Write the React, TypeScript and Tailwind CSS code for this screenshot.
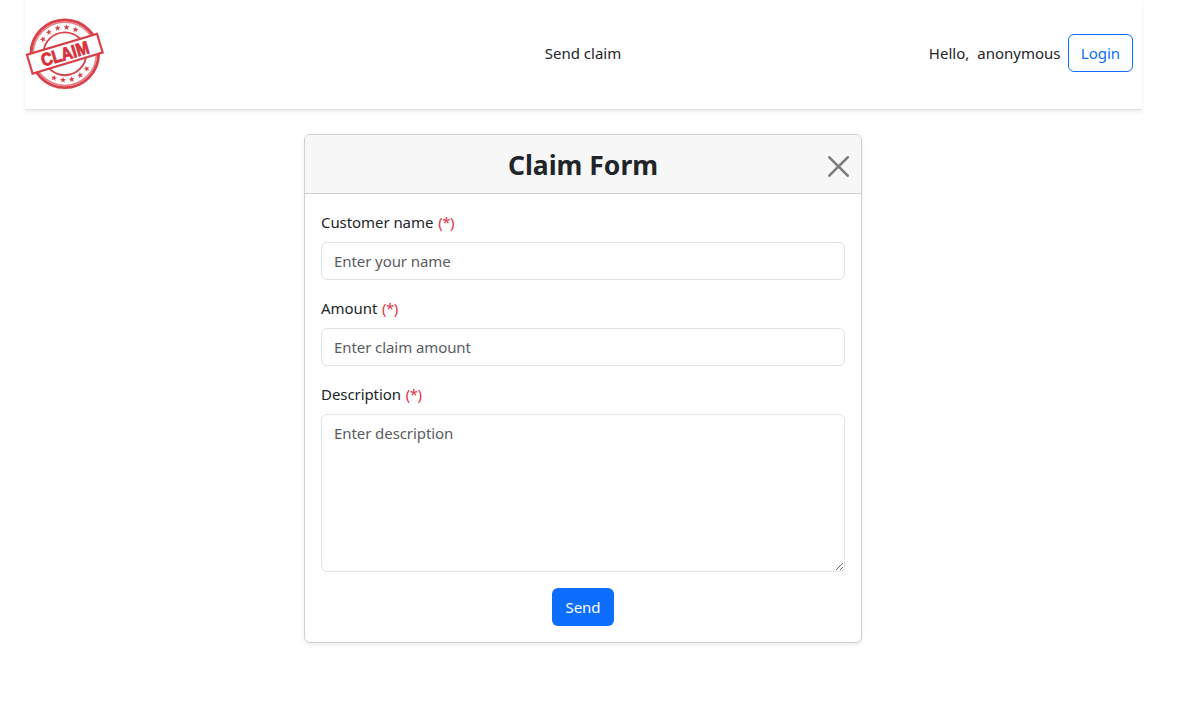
import React from "react";

const STARS: [number, number][] = [
  [43, 39.3], [48.8, 32.3], [57.6, 28.1], [66.6, 27.3], [75.5, 29.7],
  [54, 78], [63, 80], [71.7, 79.3], [80.3, 75.3], [86.7, 68.7],
];
const STAR = "M0 -3.1L.85 -1L3 -.95L1.25 .45L1.9 2.6L0 1.35L-1.9 2.6L-1.25 .45L-3 -.95L-.85 -1Z";

function Logo() {
  return (
    <svg viewBox="24 14 82 80" width="82" height="80" className="-ml-px block shrink-0">
      <g fill="none" stroke="#d8404a">
        <circle cx="64.8" cy="53.8" r="33.8" strokeWidth="2.9" />
        <circle cx="64.8" cy="53.8" r="31.6" strokeWidth="1.5" stroke="#e37f86" />
        <circle cx="64.8" cy="53.8" r="21.4" strokeWidth="1.9" />
      </g>
      {STARS.map(([x, y]) => (
        <path key={x} d={STAR} fill="#d8404a" transform={`translate(${x} ${y}) rotate(${(x - 65) * (y < 54 ? 1 : -1)})`} />
      ))}
      <g transform="translate(64.8 53.7) rotate(-16.7)">
        <rect x="-36.6" y="-9.8" width="73.2" height="19.6" fill="#fff" stroke="#d8404a" strokeWidth="2.2" />
        <text x="-24.3" y="6.4" textLength="49" lengthAdjust="spacingAndGlyphs" fill="#d5333c" stroke="#d5333c" strokeWidth=".9" fontSize="18" fontWeight="700" fontFamily="'Liberation Sans Narrow','Liberation Sans',sans-serif">CLAIM</text>
      </g>
    </svg>
  );
}

function Label({ text }: { text: string }) {
  return (
    <label className="mb-2 block h-6 whitespace-nowrap leading-6 tracking-[-0.07px]">
      {text} <span className="pl-px tracking-[-0.5px] text-[#dc3545]">(*)</span>
    </label>
  );
}

const FIELD = "block w-full rounded-md border border-[#dee2e6] bg-white px-3 py-[6px] leading-6 tracking-[-0.08px] outline-none placeholder:text-[#595c5f] placeholder:opacity-100";

export default function App() {
  return (
    <div className="h-[711px] w-[1166px] overflow-hidden bg-white font-['Noto_Sans','Open_Sans',sans-serif] text-[15px] leading-6 text-[#212529]">
      <header className="mx-auto grid h-[110px] w-[1117px] grid-cols-3 border-b border-[#dee2e6] pb-px shadow-[0_2px_4px_rgba(0,0,0,0.075)]">
        <div className="pt-[14px]"><Logo /></div>
        <div className="flex h-[106px] items-center justify-center"><a href="#">Send claim</a></div>
        <div className="flex h-[106px] items-center justify-end gap-2 pr-[9px]">
          <span>Hello,</span>
          <span className="-mr-px">anonymous</span>
          <button className="h-[38px] w-[65px] rounded-md border border-[#0d6efd] pl-px text-[#0d6efd]">Login</button>
        </div>
      </header>
      <main className="mx-auto mt-6 h-[509px] w-[558px] rounded-md border border-[#cfcfcf] bg-white shadow-[0_2px_4px_rgba(0,0,0,0.075)]">
        <div className="grid h-[59px] grid-cols-[1fr_auto_1fr] items-center rounded-t-[5px] border-b border-[#cfcfcf] bg-[#f7f7f7] px-3">
          <span />
          <h1 className="pt-[2px] text-[26.5px] font-bold">Claim Form</h1>
          <button aria-label="Close" className="mt-1 justify-self-end">
            <svg width="21" height="21" viewBox="0 0 16 16" fill="#7c7c7c">
              <path d="M.293.293a1 1 0 0 1 1.414 0L8 6.586 14.293.293a1 1 0 1 1 1.414 1.414L9.414 8l6.293 6.293a1 1 0 0 1-1.414 1.414L8 9.414l-6.293 6.293a1 1 0 0 1-1.414-1.414L6.586 8 .293 1.707a1 1 0 0 1 0-1.414z" />
            </svg>
          </button>
        </div>
        <form className="p-4">
          <div className="mb-4">
            <Label text="Customer name" />
            <input className={`${FIELD} h-[38px]`} placeholder="Enter your name" />
          </div>
          <div className="mb-4">
            <Label text="Amount" />
            <input className={`${FIELD} h-[38px]`} placeholder="Enter claim amount" />
          </div>
          <div className="mb-4">
            <Label text="Description" />
            <textarea className={`${FIELD} h-[158px] resize-y`} placeholder="Enter description" />
          </div>
          <div className="flex justify-center">
            <button type="button" className="h-[38px] w-[62px] rounded-md bg-[#0d6efd] text-white">Send</button>
          </div>
        </form>
      </main>
    </div>
  );
}
